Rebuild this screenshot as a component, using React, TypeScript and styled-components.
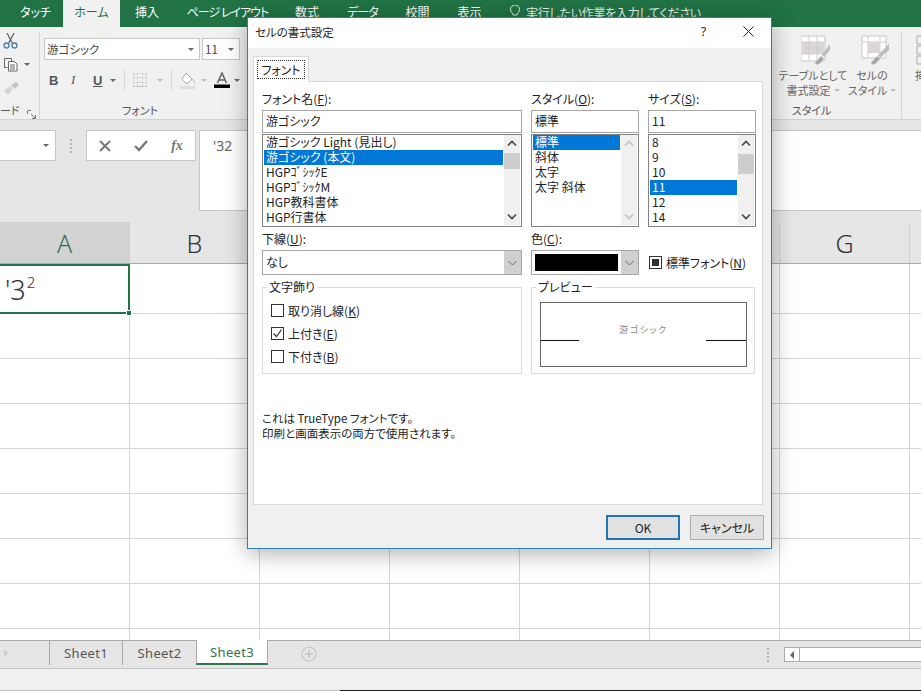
import React from 'react';
import styled, { createGlobalStyle } from 'styled-components';

const GlobalStyle = createGlobalStyle`
  html, body {
    margin: 0;
    padding: 0;
    width: 921px;
    height: 691px;
    overflow: hidden;
    background: #fff;
  }
  * {
    box-sizing: border-box;
  }
  body {
    font-family: "Noto Sans CJK JP", "Noto Sans", sans-serif;
    font-size: 12px;
    font-feature-settings: "palt";
    color: #222;
  }
`;

const Page = styled.div`
  position: relative;
  display: flex;
  flex-direction: column;
  width: 921px;
  height: 691px;
  overflow: hidden;
`;

/* ---------- ribbon ---------- */

const TabBar = styled.div`
  display: flex;
  flex: none;
  height: 27px;
  background: #217346;
`;

const RibbonTab = styled.div<{ $width: number; $active?: boolean; $pad?: number; $track?: number }>`
  display: flex;
  align-items: center;
  justify-content: center;
  flex: none;
  width: ${({ $width }) => $width}px;
  padding-left: ${({ $pad }) => $pad || 0}px;
  padding-bottom: 3px;
  font-size: 12px;
  line-height: 1;
  letter-spacing: ${({ $track }) => $track || 0}px;
  white-space: nowrap;
  color: ${({ $active }) => ($active ? '#217346' : '#fff')};
  background: ${({ $active }) => ($active ? '#f1f1f1' : 'transparent')};
`;

const TellMe = styled.div`
  display: flex;
  align-items: center;
  gap: 6px;
  padding: 0 0 3px 14px;
  color: #e6efe9;
  font-size: 12px;
  letter-spacing: -0.25px;
`;

const Ribbon = styled.div`
  display: flex;
  flex: none;
  height: 93px;
  background: #f1f1f1;
  border-bottom: 1px solid #d2d2d2;
`;

const RibbonGroup = styled.div<{ $width: number; $open?: boolean }>`
  position: relative;
  display: flex;
  flex-direction: column;
  flex: none;
  width: ${({ $width }) => $width}px;
  height: 88px;
  margin-top: 5px;
  border-right: ${({ $open }) => ($open ? 'none' : '1px solid #d6d6d6')};
`;

const GroupBody = styled.div`
  display: flex;
  flex: 1;
  min-height: 0;
`;

const GroupLabel = styled.div<{ $align?: string; $inset?: number }>`
  height: 17px;
  padding-right: ${({ $inset }) => $inset || 0}px;
  font-size: 11px;
  line-height: 15px;
  text-align: ${({ $align }) => $align || 'center'};
  color: #555;
`;

const ClipColumn = styled.div`
  display: flex;
  flex-direction: column;
  gap: 7px;
  padding: 0 0 0 3px;
`;

const ClipRow = styled.div`
  display: flex;
  align-items: center;
  gap: 5px;
  height: 17px;
`;

const Launcher = styled.svg`
  position: absolute;
  right: 3px;
  bottom: 1px;
  width: 9px;
  height: 9px;
`;

const FontTools = styled.div`
  display: flex;
  flex-direction: column;
  gap: 8px;
  padding: 6px 0 0 4px;
`;

const ComboRow = styled.div`
  display: flex;
  gap: 2px;
`;

const RibbonCombo = styled.div<{ $width: number }>`
  display: flex;
  align-items: center;
  justify-content: space-between;
  width: ${({ $width }) => $width}px;
  height: 22px;
  padding: 0 5px 0 2px;
  background: #fff;
  border: 1px solid #c6c6c6;
  font-size: 11.5px;
  color: #444;
`;

const Caret = styled.span<{ $light?: boolean }>`
  flex: none;
  width: 0;
  height: 0;
  border-left: 3px solid transparent;
  border-right: 3px solid transparent;
  border-top: 3px solid ${({ $light }) => ($light ? '#bdbdbd' : '#666')};
`;

const ToolRow = styled.div`
  display: flex;
  align-items: center;
  height: 24px;
  padding-left: 5px;
`;

const ToolGap = styled.span<{ $width: number }>`
  flex: none;
  width: ${({ $width }) => $width}px;
`;

const StyleLetter = styled.span<{ $italic?: boolean; $under?: boolean; $width: number }>`
  flex: none;
  width: ${({ $width }) => $width}px;
  font-family: "Liberation Serif", serif;
  font-size: 13px;
  font-weight: ${({ $italic }) => ($italic ? 400 : 700)};
  font-style: ${({ $italic }) => ($italic ? 'italic' : 'normal')};
  text-decoration: ${({ $under }) => ($under ? 'underline' : 'none')};
  color: #555;
`;

const BoldLetter = styled(StyleLetter)`
  font-family: "Liberation Sans", sans-serif;
`;

const ToolSep = styled.span<{ $left: number; $right: number }>`
  flex: none;
  width: 1px;
  height: 22px;
  margin: 0 ${({ $right }) => $right}px 0 ${({ $left }) => $left}px;
  background: #d6d6d6;
`;

const RibbonSpacer = styled.div`
  flex: 1;
`;

const BigButtons = styled.div`
  display: flex;
  padding-left: 1px;
`;

const BigButton = styled.div<{ $width: number }>`
  display: flex;
  flex-direction: column;
  align-items: center;
  flex: none;
  width: ${({ $width }) => $width}px;
  padding-top: 3px;
  color: #666;
  font-size: 11px;
  line-height: 15px;
  text-align: center;
  white-space: nowrap;

  svg {
    margin-bottom: 3px;
    margin-left: 6px;
  }
`;

const LabelLine = styled.span`
  display: flex;
  align-items: center;
  gap: 3px;
`;

const CutOffGroup = styled.div`
  flex: none;
  width: 19px;
  padding: 8px 0 0 13px;
  color: #666;
  font-size: 11px;
  line-height: 15px;
  white-space: nowrap;
  overflow: hidden;

  svg {
    display: block;
    margin-bottom: 3px;
  }
`;

/* ---------- formula bar ---------- */

const FormulaBar = styled.div`
  display: flex;
  flex: none;
  align-items: flex-start;
  height: 102px;
  padding-top: 10px;
  background: #e6e6e6;
`;

const NameBox = styled.div`
  display: flex;
  align-items: center;
  justify-content: flex-end;
  flex: none;
  width: 56px;
  height: 31px;
  padding-right: 6px;
  background: #fff;
  border: 1px solid #c6c6c6;
  border-left: none;
`;

const Grip = styled.div`
  display: flex;
  flex-direction: column;
  justify-content: center;
  gap: 2px;
  flex: none;
  width: 30px;
  height: 31px;
  padding-left: 14px;

  span {
    width: 2px;
    height: 2px;
    background: #b4b4b4;
  }
`;

const FormulaButtons = styled.div`
  display: flex;
  align-items: center;
  flex: none;
  width: 110px;
  height: 31px;
  background: #fff;
  border: 1px solid #c6c6c6;
`;

const FormulaButton = styled.div`
  display: flex;
  align-items: center;
  justify-content: center;
  flex: none;
  width: 36px;
  font-family: "Liberation Serif", serif;
  font-style: italic;
  font-weight: 700;
  font-size: 14px;
  color: #777;
`;

const FormulaInput = styled.div`
  flex: 1;
  height: 81px;
  margin-left: 3px;
  padding: 5px 0 0 13px;
  background: #fff;
  border: 1px solid #c6c6c6;
  border-right: none;
  font-family: "Noto Sans", sans-serif;
  font-size: 14px;
  color: #666;
`;

/* ---------- sheet ---------- */

const HeaderRow = styled.div`
  display: flex;
  flex: none;
  height: 42px;
  background: #e6e6e6;
  border-bottom: 1px solid #ababab;
`;

const ColumnHead = styled.div<{ $active?: boolean }>`
  display: flex;
  align-items: center;
  justify-content: center;
  flex: none;
  width: 130px;
  font-family: "Noto Sans", sans-serif;
  font-weight: 300;
  font-size: 25px;
  color: ${({ $active }) => ($active ? '#2f6b4d' : '#333')};
  background: ${({ $active }) => ($active ? '#d2d2d2' : 'transparent')};
  border-right: 1px solid #d0d0d0;
`;

const Grid = styled.div`
  display: grid;
  flex: 1;
  min-height: 0;
  grid-template-columns: repeat(8, 130px);
  grid-auto-rows: 45px;
  grid-template-rows: 50px;
  overflow: hidden;
`;

const Cell = styled.div`
  border-right: 1px solid #d4d4d4;
  border-bottom: 1px solid #d4d4d4;
`;

const SelectedCell = styled.div`
  position: relative;
  padding: 2px 0 0 5px;
  border: 2px solid #217346;
  border-left: none;
  font-family: "Noto Sans", sans-serif;
  font-weight: 300;
  font-size: 27px;
  line-height: 44px;
  color: #333;

  sup {
    margin-left: 1px;
    font-size: 15px;
    line-height: 0;
    vertical-align: 12px;
  }
`;

const FillHandle = styled.span`
  position: absolute;
  right: -4px;
  bottom: -4px;
  width: 6px;
  height: 6px;
  background: #217346;
  border: 1px solid #fff;
`;

const SheetBar = styled.div`
  display: flex;
  flex: none;
  height: 29px;
  background: #e6e6e6;
  border-top: 1px solid #ababab;
  border-bottom: 1px solid #c6c6c6;
`;

const SheetNav = styled.div`
  display: flex;
  align-items: center;
  flex: none;
  width: 49px;
  height: 24px;
  padding-left: 4px;
`;

const NavArrow = styled.span`
  width: 0;
  height: 0;
  border-top: 4px solid transparent;
  border-bottom: 4px solid transparent;
  border-left: 4px solid #cdcdcd;
`;

const SheetTab = styled.div<{ $active?: boolean; $width: number }>`
  display: flex;
  align-items: center;
  justify-content: center;
  flex: none;
  width: ${({ $width }) => $width}px;
  height: ${({ $active }) => ($active ? '25px' : '24px')};
  margin-top: ${({ $active }) => ($active ? '-1px' : '0')};
  padding-top: ${({ $active }) => ($active ? '1px' : '0')};
  font-family: "Noto Sans", sans-serif;
  font-size: 13px;
  letter-spacing: 0.3px;
  color: ${({ $active }) => ($active ? '#2f7350' : '#555')};
  background: ${({ $active }) => ($active ? '#fff' : 'transparent')};
  border-left: 1px solid #a8a8a8;
  border-right: ${({ $active }) => ($active ? '1px solid #a8a8a8' : 'none')};
  border-bottom: ${({ $active }) => ($active ? '2px solid #2f7350' : 'none')};
`;

const AddSheet = styled.svg`
  flex: none;
  width: 16px;
  height: 16px;
  margin: 5px 0 0 33px;
`;

const SheetBarFill = styled.div`
  flex: 1;
`;

const ScrollGrip = styled(Grip)`
  width: 17px;
  height: 14px;
  margin-top: 7px;
  padding-left: 0;
  flex: none;
`;

const HScroll = styled.div`
  display: flex;
  flex: none;
  width: 137px;
  height: 15px;
  margin-top: 6px;
  background: #fff;
  border: 1px solid #ababab;
  border-right: none;
`;

const HScrollButton = styled.div`
  display: flex;
  align-items: center;
  justify-content: center;
  flex: none;
  width: 15px;
  border-right: 1px solid #ababab;

  span {
    width: 0;
    height: 0;
    border-top: 4px solid transparent;
    border-bottom: 4px solid transparent;
    border-right: 4px solid #666;
  }
`;

const StatusBar = styled.div`
  flex: none;
  height: 21px;
  background: #f0f0f0;
`;

const BottomEdge = styled.div`
  flex: none;
  height: 1px;
  padding-left: 340px;
  background: #c4c4c4;

  &::after {
    content: '';
    display: block;
    height: 1px;
    background: #1a1a1a;
  }
`;

/* ---------- dialog ---------- */

const Dialog = styled.div`
  position: absolute;
  left: 247px;
  top: 17px;
  display: flex;
  flex-direction: column;
  width: 525px;
  height: 532px;
  background: #f0f0f0;
  border: 1px solid #2b7fb8;
  box-shadow: 0 4px 22px rgba(0, 0, 0, 0.32);
`;

const TitleBar = styled.div`
  display: flex;
  align-items: center;
  flex: none;
  height: 30px;
  padding: 0 0 3px 7px;
  background: #fff;
  font-size: 11.5px;
`;

const TitleText = styled.div`
  flex: 1;
`;

const HelpMark = styled.div`
  width: 45px;
  font-family: "Noto Sans", sans-serif;
  font-size: 12px;
  text-align: center;
  color: #222;
`;

const CloseButton = styled.div`
  display: flex;
  align-items: center;
  justify-content: center;
  width: 45px;
`;

const DialogTabs = styled.div`
  display: flex;
  flex: none;
  height: 25px;
  margin-top: 8px;
  padding-left: 5px;
`;

const DialogTab = styled.div`
  position: relative;
  z-index: 1;
  width: 56px;
  height: 26px;
  padding: 3px;
  background: #fff;
  border: 1px solid #d9d9d9;
  border-bottom: none;
`;

const FocusBox = styled.div`
  display: flex;
  align-items: center;
  justify-content: center;
  height: 19px;
  padding-bottom: 1px;
  border: 1px dotted #333;
  font-size: 12px;
`;

const Pane = styled.div`
  flex: none;
  display: flex;
  flex-direction: column;
  width: 510px;
  height: 424px;
  margin-left: 5px;
  padding: 8px 0 0 8px;
  background: #fff;
  border: 1px solid #d9d9d9;
`;

const PaneGrid = styled.div`
  display: grid;
  grid-template-columns: 260px 108px 108px;
  column-gap: 9px;
`;

const Label = styled.div`
  height: 20px;
  font-size: 12px;
  line-height: 17px;
  white-space: nowrap;

  u {
    text-underline-offset: 1px;
  }
`;

const ValueInput = styled.div`
  height: 23px;
  padding-left: 3px;
  border: 1px solid #a6a6a6;
  font-size: 12px;
  line-height: 19px;
`;

const ListBox = styled.div`
  display: flex;
  height: 93px;
  margin-top: 1px;
  padding: 0 1px 1px;
  border: 1px solid #828282;
`;

const ListItems = styled.div`
  flex: 1;
  min-width: 0;
`;

const ListRow = styled.div<{ $selected?: boolean }>`
  height: 15px;
  padding-left: 2px;
  font-size: 12px;
  line-height: 14px;
  white-space: nowrap;
  color: ${({ $selected }) => ($selected ? '#fff' : '#222')};
  background: ${({ $selected }) => ($selected ? '#0078d7' : 'transparent')};
`;

const ScrollTrack = styled.div`
  display: flex;
  flex-direction: column;
  flex: none;
  width: 16px;
  margin-left: 1px;
  background: #f0f0f0;
`;

const ScrollArrow = styled.svg`
  flex: none;
  width: 16px;
  height: 17px;
`;

const ScrollSpace = styled.div`
  flex: 1;
`;

const ScrollThumb = styled.div<{ $offset: number; $size: number }>`
  height: ${({ $size }) => $size}px;
  margin-top: ${({ $offset }) => $offset}px;
  background: #cdcdcd;
`;

const SelectRow = styled.div`
  display: grid;
  grid-template-columns: 260px 108px 108px;
  column-gap: 9px;
  margin-top: 4px;
`;

const SelectLabel = styled(Label)`
  height: 19px;
  line-height: 15px;
`;

const SelectBox = styled.div`
  display: flex;
  height: 25px;
  background: #fff;
  border: 1px solid #a6a6a6;
`;

const SelectValue = styled.div`
  flex: 1;
  padding-left: 3px;
  font-size: 12px;
  line-height: 22px;
`;

const SelectButton = styled.div`
  display: flex;
  align-items: center;
  justify-content: center;
  flex: none;
  width: 17px;
  background: #d0d0d0;
`;

const ColorSwatch = styled.div`
  flex: 1;
  margin: 3px;
  background: #000;
`;

const NormalFont = styled.div`
  display: flex;
  align-items: center;
  gap: 4px;
  align-self: end;
  height: 25px;
  padding-left: 1px;
  white-space: nowrap;
`;

const SquareBox = styled.span`
  display: flex;
  align-items: center;
  justify-content: center;
  flex: none;
  width: 13px;
  height: 13px;
  background: #fff;
  border: 1px solid #333;

  &::after {
    content: '';
    width: 7px;
    height: 7px;
    background: #333;
  }
`;

const GroupRow = styled.div`
  display: grid;
  grid-template-columns: 260px 224px;
  column-gap: 9px;
  margin-top: 5px;
`;

const GroupBox = styled.fieldset`
  display: flex;
  flex-direction: column;
  min-width: 0;
  height: 94px;
  margin: 0;
  padding: 0;
  border: 1px solid #dcdcdc;

  legend {
    margin-left: 4px;
    padding: 0 2px;
    font-size: 12px;
    line-height: 14px;
  }
`;

const CheckList = styled.div`
  display: flex;
  flex-direction: column;
  gap: 5px;
  padding: 7px 0 0 8px;
`;

const CheckRow = styled.div`
  display: flex;
  align-items: center;
  gap: 4px;
  height: 18px;
`;

const CheckBox = styled.span`
  display: flex;
  align-items: center;
  justify-content: center;
  flex: none;
  width: 13px;
  height: 13px;
  background: #fff;
  border: 1px solid #333;
`;

const PreviewBox = styled.div`
  position: relative;
  display: flex;
  align-items: center;
  justify-content: center;
  width: 207px;
  height: 65px;
  margin: 8px 0 0 8px;
  padding-bottom: 10px;
  border: 1px solid #666;
  font-size: 9px;
  letter-spacing: 1.5px;
  color: #8a8a8a;
`;

const PreviewRule = styled.span<{ $side: 'left' | 'right' }>`
  position: absolute;
  ${({ $side }) => $side}: 0;
  top: 37px;
  width: ${({ $side }) => ($side === 'left' ? 38 : 40)}px;
  height: 1px;
  background: #111;
`;

const Note = styled.div`
  margin-top: 37px;
  font-size: 11.5px;
  line-height: 15px;
`;

const DialogFooter = styled.div`
  display: flex;
  justify-content: flex-end;
  gap: 10px;
  flex: none;
  margin-top: 10px;
  padding-right: 7px;
`;

const DialogButton = styled.div<{ $primary?: boolean }>`
  display: flex;
  align-items: center;
  justify-content: center;
  width: 74px;
  height: 25px;
  font-size: 12px;
  background: #e1e1e1;
  border: ${({ $primary }) =>
    $primary ? '2px solid #1f76b6' : '1px solid #adadad'};
`;

/* ---------- drawn icons ---------- */

const ScissorsIcon = () => (
  <svg width="15" height="16" viewBox="0 0 15 16" fill="none">
    <path d="M4 0l5.500 10.500M11 0L5.500 10.500" stroke="#666" strokeWidth="1.300" />
    <circle cx="3.500" cy="12.500" r="2.500" stroke="#3f7fb0" strokeWidth="1.300" />
    <circle cx="11.500" cy="12.500" r="2.500" stroke="#3f7fb0" strokeWidth="1.300" />
  </svg>
);

const CopyIcon = () => (
  <svg width="16" height="15" viewBox="0 0 16 15" fill="none" stroke="#666">
    <path d="M1.500 1.500h7v3M1.500 1.500v9h3" />
    <path d="M5.500 4.500h6l2.500 2.500v7h-8.500zM7 8h5M7 10h5M7 12h5" fill="#fff" />
  </svg>
);

const PainterIcon = () => (
  <svg width="16" height="14" viewBox="0 0 16 14">
    <path d="M1 9l6-5 3 3-5 6z" fill="#d4d4d4" />
    <path d="M8 3l5-3 3 2-4 5z" fill="#c4c4c4" />
  </svg>
);

const BordersIcon = () => (
  <svg width="14" height="14" viewBox="0 0 14 14" fill="none">
    <path
      d="M.5.500h13v13H.500zM4.500.500v13M9.500.500v13M.500 4.500h13M.500 9.500h13"
      stroke="#c2c2c2"
      strokeDasharray="1 1"
    />
    <path d="M0 13.500h14" stroke="#c8c8c8" />
  </svg>
);

const BucketIcon = () => (
  <svg width="17" height="17" viewBox="0 0 17 17" fill="none">
    <path d="M6 1l6 6-5 5-5-5z" stroke="#aaa" fill="#fff" />
    <path d="M12 7c2 2 3 3 2.500 4.500" stroke="#c4b47a" />
    <path d="M0 14h15v3H0z" fill="#dedede" />
  </svg>
);

const FontColorIcon = () => (
  <svg width="16" height="16" viewBox="0 0 16 16">
    <path d="M3.500 11L8 1l4.500 10M5 8h6" fill="none" stroke="#666" strokeWidth="1.600" />
    <path d="M0 12.500h16V16H0z" fill="#000" />
  </svg>
);

const TableStyleIcon = () => (
  <svg width="30" height="30" viewBox="0 0 30 30" fill="none">
    <path d="M0 1h24v25H0z" fill="#fff" stroke="#c6c6c6" />
    <path d="M1 7h22v12H1z" fill="#dcd6da" />
    <path d="M0 7h24M0 13h24M0 19h24M8 1v25M16 1v25" stroke="#cfcfcf" />
    <path d="M14 28l6-7 3 3-5 5c-2 1-4 0-4-1z" fill="#a6a6a6" />
    <path d="M21 20L29 9v6l-6 7z" fill="#bcbcbc" />
  </svg>
);

const CellStyleIcon = () => (
  <svg width="30" height="30" viewBox="0 0 30 30" fill="none">
    <path d="M2 1h24v22H2z" fill="#fff" stroke="#c6c6c6" />
    <path d="M2 7h24M8 1v22M20 1v22" stroke="#cfcfcf" />
    <path d="M8 7h12v11H8z" fill="#dcd6da" />
    <path d="M11 28l6-7 3 3-5 5c-2 1-4 0-4-1z" fill="#a6a6a6" />
    <path d="M18 20L29 9v6l-9 8z" fill="#bcbcbc" />
  </svg>
);

const InsertIcon = () => (
  <svg width="24" height="30" viewBox="0 0 24 30" fill="none" stroke="#aaa">
    <path d="M2 1h22v8H2zM2 21h22v8H2z" />
    <path d="M2 11h8v8H2z" />
  </svg>
);

const ChevronUp = ({ light }: { light?: boolean }) => (
  <ScrollArrow viewBox="0 0 16 17">
    <path
      d="M4 10.500L8 6.500l4 4"
      fill="none"
      stroke={light ? '#c0c0c0' : '#444'}
      strokeWidth="1.600"
    />
  </ScrollArrow>
);

const ChevronDown = ({ light }: { light?: boolean }) => (
  <ScrollArrow viewBox="0 0 16 17">
    <path
      d="M4 6.500l4 4 4-4"
      fill="none"
      stroke={light ? '#c0c0c0' : '#444'}
      strokeWidth="1.600"
    />
  </ScrollArrow>
);

const SmallChevron = () => (
  <svg width="9" height="6" viewBox="0 0 9 6">
    <path d="M.500 1l4 4 4-4" fill="none" stroke="#666" />
  </svg>
);

/* ---------- data ---------- */

const ribbonTabs = [
  { label: 'タッチ', width: 63, pad: 8 },
  { label: 'ホーム', width: 57, active: true },
  { label: '挿入', width: 54 },
  { label: 'ページ レイアウト', width: 107, track: -1 },
  { label: '数式', width: 52 },
  { label: 'データ', width: 59, track: -1 },
  { label: '校閲', width: 51 },
  { label: '表示', width: 53 },
];

const columns = ['A', 'B', 'C', 'D', 'E', 'F', 'G', 'H'];
const fontNames = [
  '游ゴシック Light (見出し)',
  '游ゴシック (本文)',
  'HGPｺﾞｼｯｸE',
  'HGPｺﾞｼｯｸM',
  'HGP教科書体',
  'HGP行書体',
];
const fontStyles = ['標準', '斜体', '太字', '太字 斜体'];
const fontSizes = ['8', '9', '10', '11', '12', '14'];

type ListProps = {
  items: string[];
  selected: string;
  thumbOffset?: number;
  thumbSize?: number;
  disabled?: boolean;
};

const FontList = ({ items, selected, thumbOffset = 0, thumbSize = 0, disabled }: ListProps) => (
  <ListBox>
    <ListItems>
      {items.map((item) => (
        <ListRow key={item} $selected={item === selected}>
          {item}
        </ListRow>
      ))}
    </ListItems>
    <ScrollTrack>
      <ChevronUp light={disabled} />
      <ScrollSpace>
        {thumbSize > 0 && <ScrollThumb $offset={thumbOffset} $size={thumbSize} />}
      </ScrollSpace>
      <ChevronDown light={disabled} />
    </ScrollTrack>
  </ListBox>
);

const App = () => (
  <Page>
    <GlobalStyle />
    <TabBar>
      {ribbonTabs.map((tab) => (
        <RibbonTab
          key={tab.label}
          $width={tab.width}
          $active={tab.active}
          $pad={tab.pad}
          $track={tab.track}
        >
          {tab.label}
        </RibbonTab>
      ))}
      <TellMe>
        <svg width="10" height="14" viewBox="0 0 10 14" fill="none" stroke="#e6efe9">
          <path d="M3 10c0-2-2.500-3-2.500-5.500a4.500 4.500 0 0 1 9 0C9.500 7 7 8 7 10zM3.500 12.500h3" />
        </svg>
        実行したい作業を入力してください
      </TellMe>
    </TabBar>

    <Ribbon>
      <RibbonGroup $width={40}>
        <GroupBody>
          <ClipColumn>
            <ClipRow>
              <ScissorsIcon />
            </ClipRow>
            <ClipRow>
              <CopyIcon />
              <Caret />
            </ClipRow>
            <ClipRow>
              <PainterIcon />
            </ClipRow>
          </ClipColumn>
        </GroupBody>
        <GroupLabel $align="left">ード</GroupLabel>
        <Launcher viewBox="0 0 9 9" fill="none" stroke="#777">
          <path d="M.500 4V.500H4M4 4l4 4M5 8.500h3.500V5" />
        </Launcher>
      </RibbonGroup>
      <RibbonGroup $width={200} $open>
        <GroupBody>
          <FontTools>
            <ComboRow>
              <RibbonCombo $width={156}>
                游ゴシック
                <Caret />
              </RibbonCombo>
              <RibbonCombo $width={38}>
                11
                <Caret />
              </RibbonCombo>
            </ComboRow>
            <ToolRow>
              <BoldLetter $width={22}>B</BoldLetter>
              <StyleLetter $italic $width={22}>I</StyleLetter>
              <BoldLetter $under $width={17}>U</BoldLetter>
              <Caret />
              <ToolSep $left={8} $right={8} />
              <BordersIcon />
              <ToolGap $width={10} />
              <Caret $light />
              <ToolSep $left={8} $right={8} />
              <BucketIcon />
              <ToolGap $width={4} />
              <Caret $light />
              <ToolGap $width={7} />
              <FontColorIcon />
              <ToolGap $width={4} />
              <Caret />
            </ToolRow>
          </FontTools>
        </GroupBody>
        <GroupLabel>フォント</GroupLabel>
      </RibbonGroup>
      <RibbonSpacer />
      <RibbonGroup $width={124}>
        <GroupBody>
          <BigButtons>
            <BigButton $width={68}>
              <TableStyleIcon />
              <LabelLine>テーブルとして</LabelLine>
              <LabelLine>
                書式設定 <Caret $light />
              </LabelLine>
            </BigButton>
            <BigButton $width={50}>
              <CellStyleIcon />
              <LabelLine>セルの</LabelLine>
              <LabelLine>
                スタイル <Caret $light />
              </LabelLine>
            </BigButton>
          </BigButtons>
        </GroupBody>
        <GroupLabel $inset={56}>スタイル</GroupLabel>
      </RibbonGroup>
      <CutOffGroup>
        <InsertIcon />
        挿入
      </CutOffGroup>
    </Ribbon>

    <FormulaBar>
      <NameBox>
        <Caret />
      </NameBox>
      <Grip>
        <span />
        <span />
        <span />
        <span />
      </Grip>
      <FormulaButtons>
        <FormulaButton>
          <svg width="12" height="12" viewBox="0 0 12 12">
            <path d="M1 1l10 10M11 1L1 11" stroke="#777" strokeWidth="2" />
          </svg>
        </FormulaButton>
        <FormulaButton>
          <svg width="14" height="12" viewBox="0 0 14 12">
            <path d="M1 6l4 4 8-9" fill="none" stroke="#777" strokeWidth="2.400" />
          </svg>
        </FormulaButton>
        <FormulaButton>fx</FormulaButton>
      </FormulaButtons>
      <FormulaInput>'32</FormulaInput>
    </FormulaBar>

    <HeaderRow>
      {columns.map((column, index) => (
        <ColumnHead key={column} $active={index === 0}>
          {column}
        </ColumnHead>
      ))}
    </HeaderRow>

    <Grid>
      <SelectedCell>
        '3<sup>2</sup>
        <FillHandle />
      </SelectedCell>
      {Array.from({ length: 71 }, (_, index) => (
        <Cell key={index} />
      ))}
    </Grid>

    <SheetBar>
      <SheetNav>
        <NavArrow />
      </SheetNav>
      <SheetTab $width={73}>Sheet1</SheetTab>
      <SheetTab $width={74}>Sheet2</SheetTab>
      <SheetTab $active $width={72}>Sheet3</SheetTab>
      <AddSheet viewBox="0 0 16 16" fill="none" stroke="#c4c4c4">
        <circle cx="8" cy="8" r="7" strokeWidth="1.200" />
        <path d="M8 4v8M4 8h8" strokeWidth="1.600" />
      </AddSheet>
      <SheetBarFill />
      <ScrollGrip>
        <span />
        <span />
        <span />
        <span />
      </ScrollGrip>
      <HScroll>
        <HScrollButton>
          <span />
        </HScrollButton>
      </HScroll>
    </SheetBar>
    <StatusBar />
    <BottomEdge />

    <Dialog>
      <TitleBar>
        <TitleText>セルの書式設定</TitleText>
        <HelpMark>?</HelpMark>
        <CloseButton>
          <svg width="11" height="11" viewBox="0 0 11 11">
            <path d="M.500.500l10 10M10.500.500l-10 10" stroke="#222" />
          </svg>
        </CloseButton>
      </TitleBar>
      <DialogTabs>
        <DialogTab>
          <FocusBox>フォント</FocusBox>
        </DialogTab>
      </DialogTabs>
      <Pane>
        <PaneGrid>
          <div>
            <Label>フォント名(<u>F</u>):</Label>
            <ValueInput>游ゴシック</ValueInput>
            <FontList items={fontNames} selected="游ゴシック (本文)" thumbOffset={1} thumbSize={16} />
          </div>
          <div>
            <Label>スタイル(<u>O</u>):</Label>
            <ValueInput>標準</ValueInput>
            <FontList items={fontStyles} selected="標準" disabled />
          </div>
          <div>
            <Label>サイズ(<u>S</u>):</Label>
            <ValueInput>11</ValueInput>
            <FontList items={fontSizes} selected="11" thumbOffset={2} thumbSize={20} />
          </div>
        </PaneGrid>
        <SelectRow>
          <div>
            <SelectLabel>下線(<u>U</u>):</SelectLabel>
            <SelectBox>
              <SelectValue>なし</SelectValue>
              <SelectButton>
                <SmallChevron />
              </SelectButton>
            </SelectBox>
          </div>
          <div>
            <SelectLabel>色(<u>C</u>):</SelectLabel>
            <SelectBox>
              <ColorSwatch />
              <SelectButton>
                <SmallChevron />
              </SelectButton>
            </SelectBox>
          </div>
          <NormalFont>
            <SquareBox />
            <span>標準フォント(<u>N</u>)</span>
          </NormalFont>
        </SelectRow>
        <GroupRow>
          <GroupBox>
            <legend>文字飾り</legend>
            <CheckList>
              <CheckRow>
                <CheckBox />
                <span>取り消し線(<u>K</u>)</span>
              </CheckRow>
              <CheckRow>
                <CheckBox>
                  <svg width="11" height="11" viewBox="0 0 11 11">
                    <path d="M1.500 5.500l3 3 5-7" fill="none" stroke="#333" strokeWidth="1.200" />
                  </svg>
                </CheckBox>
                <span>上付き(<u>E</u>)</span>
              </CheckRow>
              <CheckRow>
                <CheckBox />
                <span>下付き(<u>B</u>)</span>
              </CheckRow>
            </CheckList>
          </GroupBox>
          <GroupBox>
            <legend>プレビュー</legend>
            <PreviewBox>
              游ゴシック
              <PreviewRule $side="left" />
              <PreviewRule $side="right" />
            </PreviewBox>
          </GroupBox>
        </GroupRow>
        <Note>
          これは TrueType フォントです。
          <br />
          印刷と画面表示の両方で使用されます。
        </Note>
      </Pane>
      <DialogFooter>
        <DialogButton $primary>OK</DialogButton>
        <DialogButton>キャンセル</DialogButton>
      </DialogFooter>
    </Dialog>
  </Page>
);

export default App;
